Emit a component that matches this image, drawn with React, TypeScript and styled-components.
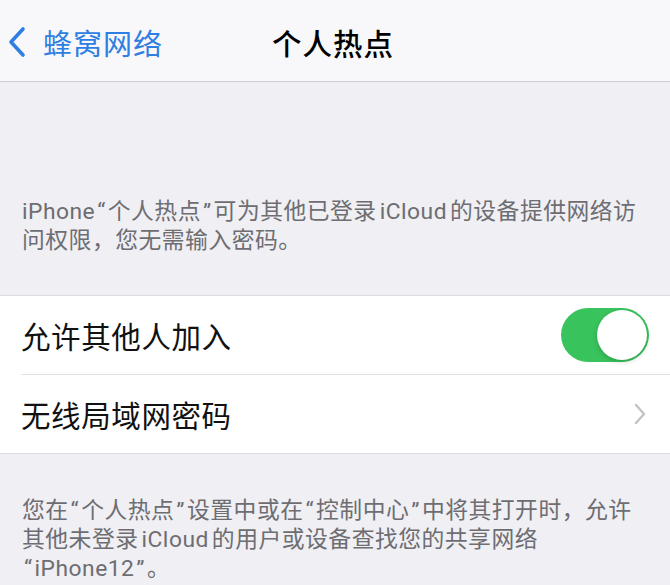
import React from 'react'
import styled, { createGlobalStyle } from 'styled-components'

const GlobalStyle = createGlobalStyle`
  html, body {
    margin: 0;
    padding: 0;
    background: #efeff4;
    font-family: 'Roboto', 'Noto Sans CJK SC', sans-serif;
    -webkit-font-smoothing: antialiased;
  }
`

const Page = styled.div`
  width: 670px;
  height: 585px;
  overflow: hidden;
  background: #efeff4;
  display: flex;
  flex-direction: column;
`

const NavBar = styled.header`
  height: 82px;
  flex-shrink: 0;
  background: #f8f8fa;
  border-bottom: 1px solid #cfcfd3;
  display: grid;
  grid-template-columns: 1fr auto 1fr;
  align-items: center;
  padding-top: 2px;
  box-sizing: border-box;
`

const BackButton = styled.div`
  display: flex;
  align-items: center;
  gap: 17px;
  padding-left: 8px;
  color: #2f7ee2;
  font-size: 29px;
  letter-spacing: 1px;
`

const Title = styled.h1`
  margin: 0 0 0 -4px;
  font-size: 29.5px;
  font-weight: 500;
  color: #000;
  letter-spacing: 1px;
`

const Note = styled.p<{ $top: number; $bottom: number }>`
  margin: 0;
  padding: ${(p) => p.$top}px 16px ${(p) => p.$bottom}px 22px;
  font-size: 22.8px;
  line-height: 29px;
  color: #6d6d72;
  letter-spacing: 0.5px;
  white-space: nowrap;
`

const Quote = styled.span`
  margin: 0 2px;
`

const Latin = styled.span`
  margin: 0 3px;
`

const Section = styled.section`
  background: #fff;
  border-top: 1px solid #dcdce0;
  border-bottom: 1px solid #dcdce0;
  margin-top: 1px;
`

const Row = styled.div<{ $divider?: boolean }>`
  height: 78px;
  display: flex;
  align-items: center;
  justify-content: space-between;
  margin-left: 21px;
  padding-right: 21px;
  border-bottom: ${(p) => (p.$divider ? '1px solid #e2e2e5' : 'none')};
`

const RowLabel = styled.span`
  font-size: 29.5px;
  color: #111;
  letter-spacing: 0.6px;
`

const Toggle = styled.div<{ $on: boolean }>`
  width: 88px;
  height: 54px;
  border-radius: 27px;
  background: ${(p) => (p.$on ? '#38c35c' : '#e5e5ea')};
  position: relative;

  &::after {
    content: '';
    position: absolute;
    top: 2px;
    left: ${(p) => (p.$on ? '36px' : '2px')};
    width: 50px;
    height: 50px;
    border-radius: 50%;
    background: #fff;
    box-shadow: 0 2px 5px rgba(0, 0, 0, 0.18);
  }
`

const Chevron = () => (
  <svg width="14" height="22" viewBox="0 0 14 22" style={{ marginRight: 2 }}>
    <polyline points="3,2 11,11 3,20" fill="none" stroke="#c3c3c7" strokeWidth="2.4" strokeLinecap="round" strokeLinejoin="round" />
  </svg>
)

const BackChevron = () => (
  <svg width="18" height="32" viewBox="0 0 18 32">
    <polyline points="15,3 3,16 15,29" fill="none" stroke="#2f7ee2" strokeWidth="3.6" strokeLinecap="round" strokeLinejoin="round" />
  </svg>
)

export default function App() {
  return (
    <Page>
      <GlobalStyle />
      <NavBar>
        <BackButton>
          <BackChevron />
          蜂窝网络
        </BackButton>
        <Title>个人热点</Title>
        <div />
      </NavBar>

      <Note $top={115} $bottom={39}>
        iPhone<Quote>“</Quote>个人热点<Quote>”</Quote>可为其他已登录<Latin>iCloud</Latin>的设备提供网络访
        <br />
        问权限，您无需输入密码。
      </Note>

      <Section>
        <Row $divider>
          <RowLabel>允许其他人加入</RowLabel>
          <Toggle $on />
        </Row>
        <Row>
          <RowLabel>无线局域网密码</RowLabel>
          <Chevron />
        </Row>
      </Section>

      <Note $top={42} $bottom={0}>
        您在<Quote>“</Quote>个人热点<Quote>”</Quote>设置中或在<Quote>“</Quote>控制中心<Quote>”</Quote>中将其打开时，允许
        <br />
        其他未登录<Latin>iCloud</Latin>的用户或设备查找您的共享网络
        <br />
        <Quote>“</Quote>iPhone12<Quote>”</Quote>。
      </Note>
    </Page>
  )
}
